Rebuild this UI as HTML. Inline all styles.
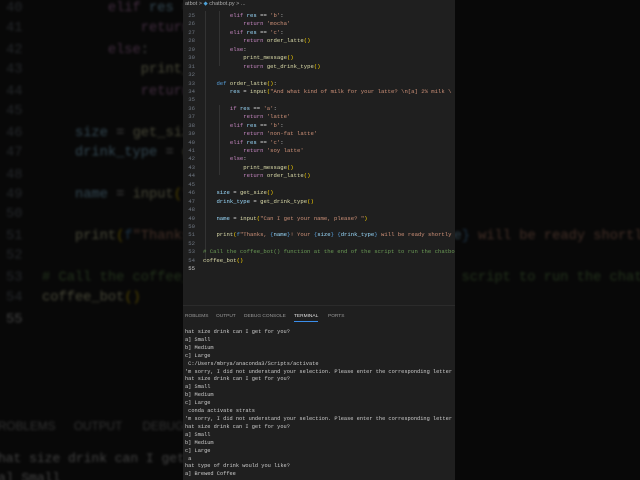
<!DOCTYPE html>
<html><head><meta charset="utf-8"><style>
*{margin:0;padding:0;box-sizing:border-box}
body{width:640px;height:480px;overflow:hidden;background:#0c0c0c;position:relative;font-family:"Liberation Mono",monospace}
.pane{position:absolute;left:183px;top:0;width:272px;height:480px;background:#1f1f1f;overflow:hidden}
.bg{position:absolute;left:0;top:0;width:640px;height:480px;overflow:hidden}
.bg .pane{transform-origin:131px 239px;transform:scale(2.45);filter:brightness(0.32) blur(0.5px);background:#1a1a1a;overflow:visible}
.crumb{position:absolute;left:0;top:0;height:9px;width:272px;font:5.5px "Liberation Sans",sans-serif;color:#aaa;padding-left:2px;line-height:9px;white-space:pre}
.crumb b{color:#4fa3d9;font-weight:normal}
.code{position:absolute;left:0;top:12px;font-size:5.6px;line-height:8.43px;white-space:pre;color:#d4d4d4}
.ln{display:inline-block;width:12px;text-align:right;color:#6e7681;margin-right:8px}
.cur{color:#ccc}
.k{color:#c586c0}.d{color:#569cd6}.v{color:#9cdcfe}.f{color:#dcdcaa}.s{color:#ce9178}.p{color:#ffd700}.c{color:#6a9955}
.div{position:absolute;left:0;top:305px;width:272px;height:1px;background:#2b2b2b}
.tabs{position:absolute;left:2px;top:314px;font:4.8px "Liberation Sans",sans-serif;color:#999;white-space:pre}
.tabs span{position:absolute;top:0}
.tabs .on{color:#e0e0e0}
.ul{position:absolute;left:111px;top:321px;width:24px;height:1px;background:#3b8eea}
.term{position:absolute;left:2px;top:329px;font-size:5.3px;line-height:7.9px;white-space:pre;color:#cccccc}
.guide{position:absolute;width:1px;background:#333}
</style></head><body>
<div class="bg"><div class="pane">
<div class="code" style="top:141px"><span class="ln">40</span>        <span class="k">elif</span> <span class="v">res</span> == <span class="s">'c'</span>:
<span class="ln">41</span>            <span class="k">return</span> <span class="s">'soy latte'</span>
<span class="ln">42</span>        <span class="k">else</span>:
<span class="ln">43</span>            <span class="f">print_message</span><span class="p">()</span>
<span class="ln">44</span>            <span class="k">return</span> <span class="f">order_latte</span><span class="p">()</span>
<span class="ln">45</span>
<span class="ln">46</span>    <span class="v">size</span> = <span class="f">get_size</span><span class="p">()</span>
<span class="ln">47</span>    <span class="v">drink_type</span> = <span class="f">get_drink_type</span><span class="p">()</span>
<span class="ln">48</span>
<span class="ln">49</span>    <span class="v">name</span> = <span class="f">input</span><span class="p">(</span><span class="s">"Can I get your name, please? "</span><span class="p">)</span>
<span class="ln">50</span>
<span class="ln">51</span>    <span class="f">print</span><span class="p">(</span><span class="d">f</span><span class="s">"Thanks, </span><span class="d">{</span><span class="v">name</span><span class="d">}</span><span class="s">! Your </span><span class="d">{</span><span class="v">size</span><span class="d">}</span> <span class="d">{</span><span class="v">drink_type</span><span class="d">}</span><span class="s"> will be ready shortly</span>
<span class="ln">52</span>
<span class="ln">53</span><span class="c"># Call the coffee_bot() function at the end of the script to run the chatbot</span>
<span class="ln">54</span><span class="f">coffee_bot</span><span class="p">()</span>
<span class="ln cur">55</span></div>
<div class="tabs"><span style="left:0">ROBLEMS</span><span style="left:31px">OUTPUT</span><span style="left:59px">DEBUG CONSOLE</span></div>
<div class="term" style="top:326px">hat size drink can I get for you?
a] Small</div>
</div></div>

<div class="pane">
<div class="crumb">atbot &gt; <b>◆</b> chatbot.py &gt; ...</div>
<div class="guide" style="left:22px;top:11px;height:250px"></div>
<div class="guide" style="left:36px;top:11px;height:55px"></div>
<div class="guide" style="left:36px;top:105px;height:70px"></div>
<div class="code"><span class="ln">25</span>        <span class="k">elif</span> <span class="v">res</span> == <span class="s">'b'</span>:
<span class="ln">26</span>            <span class="k">return</span> <span class="s">'mocha'</span>
<span class="ln">27</span>        <span class="k">elif</span> <span class="v">res</span> == <span class="s">'c'</span>:
<span class="ln">28</span>            <span class="k">return</span> <span class="f">order_latte</span><span class="p">()</span>
<span class="ln">29</span>        <span class="k">else</span>:
<span class="ln">30</span>            <span class="f">print_message</span><span class="p">()</span>
<span class="ln">31</span>            <span class="k">return</span> <span class="f">get_drink_type</span><span class="p">()</span>
<span class="ln">32</span>
<span class="ln">33</span>    <span class="d">def</span> <span class="f">order_latte</span><span class="p">()</span>:
<span class="ln">34</span>        <span class="v">res</span> = <span class="f">input</span><span class="p">(</span><span class="s">"And what kind of milk for your latte? \n[a] 2% milk \</span>
<span class="ln">35</span>
<span class="ln">36</span>        <span class="k">if</span> <span class="v">res</span> == <span class="s">'a'</span>:
<span class="ln">37</span>            <span class="k">return</span> <span class="s">'latte'</span>
<span class="ln">38</span>        <span class="k">elif</span> <span class="v">res</span> == <span class="s">'b'</span>:
<span class="ln">39</span>            <span class="k">return</span> <span class="s">'non-fat latte'</span>
<span class="ln">40</span>        <span class="k">elif</span> <span class="v">res</span> == <span class="s">'c'</span>:
<span class="ln">41</span>            <span class="k">return</span> <span class="s">'soy latte'</span>
<span class="ln">42</span>        <span class="k">else</span>:
<span class="ln">43</span>            <span class="f">print_message</span><span class="p">()</span>
<span class="ln">44</span>            <span class="k">return</span> <span class="f">order_latte</span><span class="p">()</span>
<span class="ln">45</span>
<span class="ln">46</span>    <span class="v">size</span> = <span class="f">get_size</span><span class="p">()</span>
<span class="ln">47</span>    <span class="v">drink_type</span> = <span class="f">get_drink_type</span><span class="p">()</span>
<span class="ln">48</span>
<span class="ln">49</span>    <span class="v">name</span> = <span class="f">input</span><span class="p">(</span><span class="s">"Can I get your name, please? "</span><span class="p">)</span>
<span class="ln">50</span>
<span class="ln">51</span>    <span class="f">print</span><span class="p">(</span><span class="d">f</span><span class="s">"Thanks, </span><span class="d">{</span><span class="v">name</span><span class="d">}</span><span class="s">! Your </span><span class="d">{</span><span class="v">size</span><span class="d">}</span> <span class="d">{</span><span class="v">drink_type</span><span class="d">}</span><span class="s"> will be ready shortly</span>
<span class="ln">52</span>
<span class="ln">53</span><span class="c"># Call the coffee_bot() function at the end of the script to run the chatbot</span>
<span class="ln">54</span><span class="f">coffee_bot</span><span class="p">()</span>
<span class="ln cur">55</span></div>
<div class="div"></div>
<div class="tabs"><span style="left:0">ROBLEMS</span><span style="left:31px">OUTPUT</span><span style="left:59px">DEBUG CONSOLE</span><span class="on" style="left:109px">TERMINAL</span><span style="left:143px">PORTS</span></div>
<div class="ul"></div>
<div class="term">hat size drink can I get for you?
a] Small
b] Medium
c] Large
 C:/Users/mbrya/anaconda3/Scripts/activate
'm sorry, I did not understand your selection. Please enter the corresponding letter
hat size drink can I get for you?
a] Small
b] Medium
c] Large
 conda activate strats
'm sorry, I did not understand your selection. Please enter the corresponding letter
hat size drink can I get for you?
a] Small
b] Medium
c] Large
 a
hat type of drink would you like?
a] Brewed Coffee</div>
</div>
</body></html>
